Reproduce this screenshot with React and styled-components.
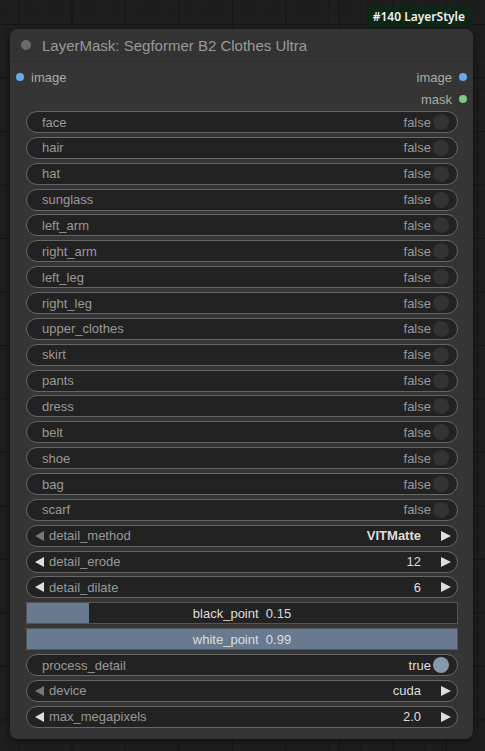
import React from "react";
import styled, { createGlobalStyle, css } from "styled-components";

const Global = createGlobalStyle`
  html, body { margin: 0; padding: 0; }
  body {
    width: 485px;
    height: 751px;
    overflow: hidden;
    background-color: #1e1e1e;
    background-image:
      linear-gradient(to right, #141414 1px, transparent 1px),
      linear-gradient(to bottom, #141414 1px, transparent 1px),
      linear-gradient(to right, #1a1a1a 1px, transparent 1px),
      linear-gradient(to bottom, #1a1a1a 1px, transparent 1px);
    background-size: 53.5px 53.5px, 53.5px 53.5px, 10.7px 10.7px, 10.7px 10.7px;
    background-position: 18px 0, 0 24px, 18px 0, 0 24px;
    font-family: Arial, "Liberation Sans", sans-serif;
  }
`;

const Canvas = styled.div`
  display: flex;
  flex-direction: column;
  align-items: flex-start;
  padding: 6px 0 0 10px;
`;

const BadgeRow = styled.div`
  width: 463px;
  display: flex;
  justify-content: flex-end;
  margin-bottom: 2px;
`;

const Badge = styled.div`
  height: 21px;
  padding: 0 7px;
  margin-right: 1px;
  display: flex;
  align-items: center;
  background: #0e2616;
  border-radius: 6px;
  color: #f0f0f0;
  font-family: "Noto Sans", "Open Sans", sans-serif;
  font-size: 12px;
  font-weight: 600;
`;

const Node = styled.div`
  width: 463px;
  background: #353535;
  border-radius: 8px;
  box-shadow: 0 2px 6px rgba(0, 0, 0, 0.5);
  overflow: hidden;
`;

const TitleBar = styled.div`
  height: 33px;
  display: flex;
  align-items: center;
  background: #333333;
  border-bottom: 1px solid #2e2e2e;
  box-sizing: border-box;
  padding-left: 11px;
  gap: 11px;
`;

const TitleDot = styled.span`
  width: 10px;
  height: 10px;
  border-radius: 50%;
  background: #6a6a6a;
`;

const Title = styled.span`
  color: #999999;
  font-size: 15px;
`;

const Body = styled.div`
  display: flex;
  flex-direction: column;
  padding: 4px 0 11px;
`;

const SlotRow = styled.div`
  height: 22px;
  display: flex;
  align-items: center;
  justify-content: space-between;
  padding: 0 6px;
`;

const Slot = styled.div`
  display: flex;
  align-items: center;
  gap: 7px;
  color: #aaaaaa;
  font-size: 13px;
  ${(p) => p.$right && css`margin-left: auto;`}
`;

const SlotDot = styled.span`
  width: 8px;
  height: 8px;
  border-radius: 50%;
  background: ${(p) => p.$color};
`;

const Widgets = styled.div`
  display: flex;
  flex-direction: column;
  gap: 3.87px;
  margin: 1px 15px 0 16px;
`;

const Pill = styled.div`
  height: 22px;
  box-sizing: border-box;
  border: 1px solid #666666;
  border-radius: 11px;
  background: #222222;
  display: flex;
  align-items: center;
  font-size: 13px;
  color: #999999;
`;

const ToggleLabel = styled.span`
  padding-left: 15px;
  flex: 1;
`;

const ToggleValue = styled.span`
  color: ${(p) => (p.$on ? "#dddddd" : "#999999")};
  margin-right: 2px;
`;

const Knob = styled.span`
  width: 16px;
  height: 16px;
  border-radius: 50%;
  margin-right: 8px;
  background: ${(p) => (p.$on ? "#8797ad" : "#333333")};
`;

const Arrow = styled.span`
  width: 0;
  height: 0;
  border-top: 5px solid transparent;
  border-bottom: 5px solid transparent;
  ${(p) =>
    p.$dir === "left"
      ? css`
          border-right: 9px solid ${p.$dim ? "#777777" : "#dddddd"};
          margin: 0 5px 0 8px;
        `
      : css`
          border-left: 10px solid #dddddd;
          margin: 0 6px 0 20px;
        `}
`;

const ComboLabel = styled.span`
  flex: 1;
  color: #999999;
`;

const ComboValue = styled.span`
  color: #dddddd;
  font-weight: ${(p) => (p.$bold ? 700 : 400)};
`;

const SliderBox = styled.div`
  position: relative;
  height: 22px;
  box-sizing: border-box;
  border: 1px solid #555555;
  background: #222222;
  display: flex;
  align-items: center;
  justify-content: center;
  font-size: 13px;
  color: #dddddd;
  overflow: hidden;
`;

const SliderFill = styled.div`
  position: absolute;
  left: 0;
  top: 0;
  bottom: 0;
  background: #687a8f;
`;

const SliderText = styled.span`
  position: relative;
  white-space: pre;
`;

const toggles = [
  "face",
  "hair",
  "hat",
  "sunglass",
  "left_arm",
  "right_arm",
  "left_leg",
  "right_leg",
  "upper_clothes",
  "skirt",
  "pants",
  "dress",
  "belt",
  "shoe",
  "bag",
  "scarf",
];

function Toggle({ label, on }) {
  return (
    <Pill>
      <ToggleLabel>{label}</ToggleLabel>
      <ToggleValue $on={on}>{on ? "true" : "false"}</ToggleValue>
      <Knob $on={on} />
    </Pill>
  );
}

function Combo({ label, value, dimLeft, bold }) {
  return (
    <Pill>
      <Arrow $dir="left" $dim={dimLeft} />
      <ComboLabel>{label}</ComboLabel>
      <ComboValue $bold={bold}>{value}</ComboValue>
      <Arrow $dir="right" />
    </Pill>
  );
}

function Slider({ label, value, frac }) {
  return (
    <SliderBox>
      <SliderFill style={{ width: `${frac * 100}%` }} />
      <SliderText>
        {label}  {value}
      </SliderText>
    </SliderBox>
  );
}

export default function App() {
  return (
    <>
      <Global />
      <Canvas>
        <BadgeRow>
          <Badge>#140 LayerStyle</Badge>
        </BadgeRow>
        <Node>
          <TitleBar>
            <TitleDot />
            <Title>LayerMask: Segformer B2 Clothes Ultra</Title>
          </TitleBar>
          <Body>
            <SlotRow>
              <Slot>
                <SlotDot $color="#6aa8f0" />
                image
              </Slot>
              <Slot $right>
                image
                <SlotDot $color="#6aa8f0" />
              </Slot>
            </SlotRow>
            <SlotRow>
              <Slot $right>
                mask
                <SlotDot $color="#7fc784" />
              </Slot>
            </SlotRow>
            <Widgets>
              {toggles.map((t) => (
                <Toggle key={t} label={t} on={false} />
              ))}
              <Combo label="detail_method" value="VITMatte" dimLeft bold />
              <Combo label="detail_erode" value="12" />
              <Combo label="detail_dilate" value="6" />
              <Slider label="black_point" value="0.15" frac={0.145} />
              <Slider label="white_point" value="0.99" frac={1} />
              <Toggle label="process_detail" on />
              <Combo label="device" value="cuda" dimLeft />
              <Combo label="max_megapixels" value="2.0" />
            </Widgets>
          </Body>
        </Node>
      </Canvas>
    </>
  );
}
